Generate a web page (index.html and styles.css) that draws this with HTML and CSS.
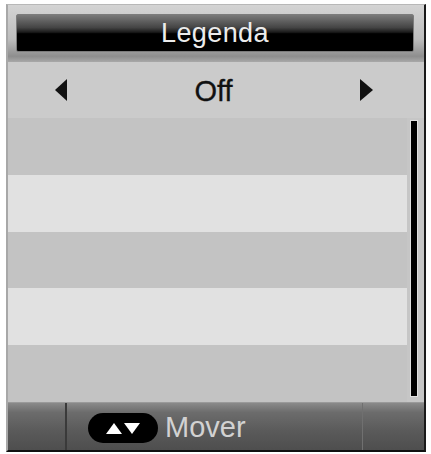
FILE: index.html
```html
<!DOCTYPE html>
<html>
<head>
<meta charset="utf-8">
<link rel="stylesheet" href="styles.css">
</head>
<body>
<div class="frame">
  <div class="header">
    <div class="title">Legenda</div>
  </div>
  <div class="option">
    <svg class="arrow" width="12" height="22" viewBox="0 0 12 22"><path d="M0 11 L12 0 L12 22 Z" fill="#111"/></svg>
    <span class="value">Off</span>
    <svg class="arrow" width="13" height="22" viewBox="0 0 13 22"><path d="M13 11 L0 0 L0 22 Z" fill="#111"/></svg>
  </div>
  <div class="body">
    <div class="stripes">
      <div class="row dark"></div>
      <div class="row light"></div>
      <div class="row dark"></div>
      <div class="row light"></div>
      <div class="row dark"></div>
    </div>
    <div class="track"><div class="thumb"></div></div>
  </div>
  <div class="footer">
    <div class="cell side"></div>
    <div class="cell main">
      <span class="pill">
        <svg width="36" height="14" viewBox="0 0 36 14"><path d="M1 13 L9 2 L17 13 Z" fill="#fff"/><path d="M19 2 L35 2 L27 13 Z" fill="#fff"/></svg>
      </span>
      <span class="label">Mover</span>
    </div>
    <div class="cell side right"></div>
  </div>
</div>
</body>
</html>
```

FILE: styles.css
```css
html, body {
  margin: 0;
  padding: 0;
  background: #ffffff;
}
body {
  font-family: "Liberation Sans", Arial, sans-serif;
}
.frame {
  margin: 4px 0 0 6px;
  width: 416px;
  height: 445px;
  border-top: 1px solid #b8b8b8;
  border-left: 2px solid #a8a8a8;
  border-right: 2px solid #1a1a1a;
  border-bottom: 2px solid #111;
  display: flex;
  flex-direction: column;
  background: #c4c4c4;
}
.header {
  height: 57px;
  box-sizing: border-box;
  padding: 9px 10px 0 8px;
  background: linear-gradient(#d4d4d4 0%, #bdbdbd 60%, #8e8e8e 90%, #a8a8a8 100%);
}
.title {
  height: 38px;
  box-sizing: border-box;
  border: 1px solid #7c7c7c;
  border-radius: 2px;
  background: linear-gradient(#7a7a7a 0%, #444 35%, #1a1a1a 48%, #000 52%, #000 100%);
  color: #ececec;
  font-size: 27px;
  line-height: 36px;
  text-align: center;
  letter-spacing: 0.4px;
}
.option {
  height: 56px;
  background: #cbcbcb;
  display: flex;
  align-items: center;
  padding: 0 0 0 47px;
  box-sizing: border-box;
}
.option .value {
  width: 293px;
  text-align: center;
  font-size: 29px;
  color: #111;
  padding-top: 2px;
  -webkit-text-stroke: 0.3px #111;
}
.body {
  height: 284px;
  display: flex;
}
.stripes {
  flex: 1;
  display: flex;
  flex-direction: column;
}
.row {
  flex: 1;
}
.dark {
  background: #c3c3c3;
}
.light {
  background: #e1e1e1;
}
.track {
  width: 17px;
  background: #c6c6c6;
  box-sizing: border-box;
  padding: 2px 0 5px 3px;
}
.thumb {
  width: 8px;
  height: 100%;
  box-sizing: border-box;
  background: #000;
  border: 1px solid #e0e0e0;
}
.footer {
  flex: 1;
  display: flex;
  background: linear-gradient(#8a8a8a 0%, #6c6c6c 20%, #5a5a5a 60%, #4e4e4e 100%);
  border-top: 1px solid #9a9a9a;
}
.cell.side {
  width: 57px;
  border-right: 2px solid #3a3a3a;
}
.cell.side.right {
  width: 61px;
  border-right: none;
  border-left: 1px solid #707070;
}
.cell.main {
  flex: 1;
  display: flex;
  align-items: center;
  padding-left: 21px;
  padding-top: 2px;
}
.pill {
  width: 70px;
  height: 30px;
  border-radius: 15px;
  background: #000;
  display: flex;
  align-items: center;
  justify-content: center;
}
.label {
  margin-left: 7px;
  font-size: 29px;
  color: #d2d2d2;
}
```
